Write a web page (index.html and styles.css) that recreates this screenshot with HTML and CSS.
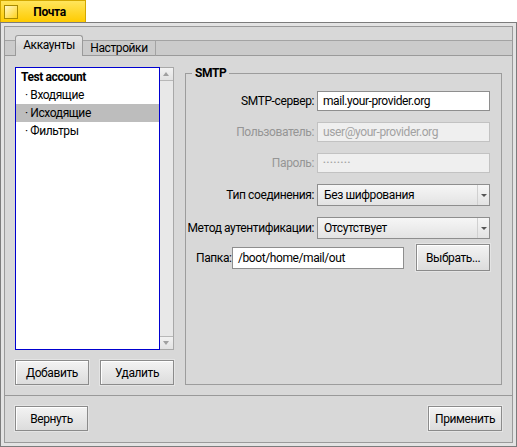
FILE: index.html
```html
<!DOCTYPE html>
<html lang="ru">
<head>
    <meta charset="UTF-8">
    <title>Почта</title>
    <link rel="stylesheet" href="styles.css">
</head>
<body>

    <div class="title-tab">
        <span class="close-box"></span>
        <span class="title">Почта</span>
    </div>

    <div class="window">
        <div class="window-inner">

            <div class="tabs">
                <div class="tab-edge"></div>
                <div class="tab active">Аккаунты</div>
                <div class="tab">Настройки</div>
                <div class="tab-rest"></div>
            </div>

            <div class="panel">
                <div class="accounts">
                    <div class="list-wrap">
                        <ul class="list">
                            <li class="account">Test account</li>
                            <li>· Входящие</li>
                            <li class="selected">· Исходящие</li>
                            <li>· Фильтры</li>
                        </ul>
                        <div class="scrollbar">
                            <span class="arrow up"></span>
                            <span class="track"></span>
                            <span class="arrow down"></span>
                        </div>
                    </div>
                    <div class="list-buttons">
                        <button class="btn">Добавить</button>
                        <button class="btn">Удалить</button>
                    </div>
                </div>

                <fieldset class="smtp">
                    <legend>SMTP</legend>

                    <div class="form-grid">
                        <label>SMTP-сервер:</label>
                        <div class="text-field">mail.your-provider.org</div>

                        <label class="disabled">Пользователь:</label>
                        <div class="text-field disabled">user@your-provider.org</div>

                        <label class="disabled">Пароль:</label>
                        <div class="text-field disabled password">••••••••</div>

                        <label>Тип соединения:</label>
                        <div class="menu-field">Без шифрования<span class="menu-arrow"></span></div>

                        <label>Метод аутентификации:</label>
                        <div class="menu-field">Отсутствует<span class="menu-arrow"></span></div>
                    </div>

                    <div class="folder-row">
                        <label>Папка:</label>
                        <div class="text-field folder">/boot/home/mail/out</div>
                        <button class="btn choose">Выбрать...</button>
                    </div>
                </fieldset>
            </div>

            <div class="bottom-bar">
                <button class="btn">Вернуть</button>
                <button class="btn">Применить</button>
            </div>

        </div>
    </div>

</body>
</html>
```

FILE: styles.css
```css
* {
    margin: 0;
    padding: 0;
    box-sizing: border-box;
}

body {
    font-family: Roboto, 'Noto Sans', sans-serif;
    font-size: 12px;
    letter-spacing: -0.4px;
    color: #000;
    background: #fff;
    width: 517px;
    height: 447px;
    overflow: hidden;
}

/* заголовок окна */
.title-tab {
    width: 86px;
    height: 22px;
    display: flex;
    align-items: center;
    background: linear-gradient(#ffe55c, #ffcb00);
    border: 1px solid #d3a800;
    border-bottom: none;
}

.close-box {
    width: 14px;
    height: 14px;
    margin-left: 3px;
    border: 1px solid #a88a00;
    background: linear-gradient(135deg, #fff8cc, #ffd21a);
}

.title {
    flex: 1;
    text-align: center;
    font-weight: bold;
    padding-right: 4px;
}

.window {
    height: 425px;
    border: 1px solid #7c7c7c;
    background: #e3e3e3;
    padding: 3px;
}

.window-inner {
    height: 100%;
    border: 1px solid #9a9a9a;
    background: #d8d8d8;
    display: flex;
    flex-direction: column;
}

/* вкладки */
.tabs {
    display: flex;
    align-items: flex-end;
    height: 29px;
    padding-top: 8px;
}

.tab-edge, .tab-rest, .tab {
    height: 16px;
    background: #cbcbcb;
    border-top: 1px solid #a3a3a3;
    border-bottom: 1px solid #9a9a9a;
}

.tab-edge {
    width: 10px;
}

.tab-rest {
    flex: 1;
}

.tab {
    width: 73px;
    text-align: center;
    border-right: 1px solid #a3a3a3;
    line-height: 14px;
}

.tab.active {
    height: 21px;
    width: 68px;
    line-height: 19px;
    background: linear-gradient(#e6e6e6, #d8d8d8 60%);
    border: 1px solid #9a9a9a;
    border-bottom: none;
    border-radius: 3px 3px 0 0;
}

.panel {
    height: 340px;
    display: flex;
    gap: 11px;
    padding: 11px 10px 10px 10px;
    border-bottom: 1px solid #999;
}

/* список аккаунтов */
.accounts {
    width: 159px;
    display: flex;
    flex-direction: column;
}

.list-wrap {
    height: 283px;
    display: flex;
}

.list {
    flex: 1;
    list-style: none;
    background: #fff;
    border: 1px solid #0000d0;
}

.list li {
    height: 18px;
    line-height: 18px;
    padding-left: 9px;
}

.list li.account {
    padding-left: 5px;
    font-weight: bold;
}

.list li.selected {
    background: #bdbdbd;
}

.scrollbar {
    width: 14px;
    display: flex;
    flex-direction: column;
    background: #e8e8e8;
    border: 1px solid #a8a8a8;
    border-left: none;
}

.scrollbar .track {
    flex: 1;
}

.arrow {
    height: 13px;
    position: relative;
    background: linear-gradient(#f2f2f2, #e2e2e2);
}

.arrow.up {
    border-bottom: 1px solid #b8b8b8;
}

.arrow.down {
    border-top: 1px solid #b8b8b8;
}

.arrow::after {
    content: "";
    position: absolute;
    left: 3px;
    top: 4px;
    border-left: 3.5px solid transparent;
    border-right: 3.5px solid transparent;
}

.arrow.up::after {
    border-bottom: 4px solid #a0a0a0;
}

.arrow.down::after {
    border-top: 4px solid #a0a0a0;
}

.list-buttons {
    display: flex;
    justify-content: space-between;
    margin-top: 10px;
}

.btn {
    width: 74px;
    height: 25px;
    font: inherit;
    letter-spacing: inherit;
    color: #000;
    background: linear-gradient(#f3f3f3, #dcdcdc);
    border: 1px solid #8b8b8b;
    box-shadow: inset 1px 1px 0 #fff, 0 0 0 1px #e4e4e4;
}

/* группа SMTP */
.smtp {
    flex: 1;
    border: 1px solid #9c9c9c;
    padding: 0 11px 0 0;
    min-width: 0;
}

.smtp legend {
    margin-left: 6px;
    padding: 0 3px;
    font-weight: bold;
    line-height: 13px;
}

.form-grid {
    display: grid;
    grid-template-columns: minmax(0, 1fr) 173px;
    column-gap: 3px;
    row-gap: 11px;
    align-items: center;
    margin-top: 11px;
}

.form-grid label {
    text-align: right;
    white-space: nowrap;
}

label.disabled {
    color: #959595;
}

.text-field {
    height: 20px;
    line-height: 18px;
    padding-left: 5px;
    background: #fff;
    border: 1px solid #8e8e8e;
    white-space: nowrap;
    overflow: hidden;
}

.text-field.disabled {
    background: #efefef;
    border-color: #c2c2c2;
    color: #a2a2a2;
}

.text-field.password {
    font-size: 8px;
    letter-spacing: 0.8px;
    line-height: 18px;
}

.menu-field {
    position: relative;
    height: 22px;
    line-height: 20px;
    padding-left: 6px;
    background: linear-gradient(#f6f6f6, #e3e3e3);
    border: 1px solid #8e8e8e;
}

.menu-arrow {
    position: absolute;
    right: 0;
    top: 0;
    width: 12px;
    height: 20px;
    border-left: 1px solid #d0d0d0;
}

.menu-arrow::after {
    content: "";
    position: absolute;
    left: 3px;
    top: 9px;
    border-left: 3px solid transparent;
    border-right: 3px solid transparent;
    border-top: 3px solid #555;
}

.folder-row {
    display: flex;
    align-items: center;
    margin-top: 5px;
    padding-left: 10px;
}

.folder-row label {
    width: 36px;
}

.text-field.folder {
    width: 173px;
    height: 22px;
    line-height: 20px;
}

.btn.choose {
    height: 27px;
    margin-left: 12px;
}

/* нижняя панель */
.bottom-bar {
    display: flex;
    justify-content: space-between;
    padding: 10px 10px 0 10px;
}

.bottom-bar .btn {
    width: 73px;
}

.bottom-bar .btn:last-child {
    width: 74px;
}
```
